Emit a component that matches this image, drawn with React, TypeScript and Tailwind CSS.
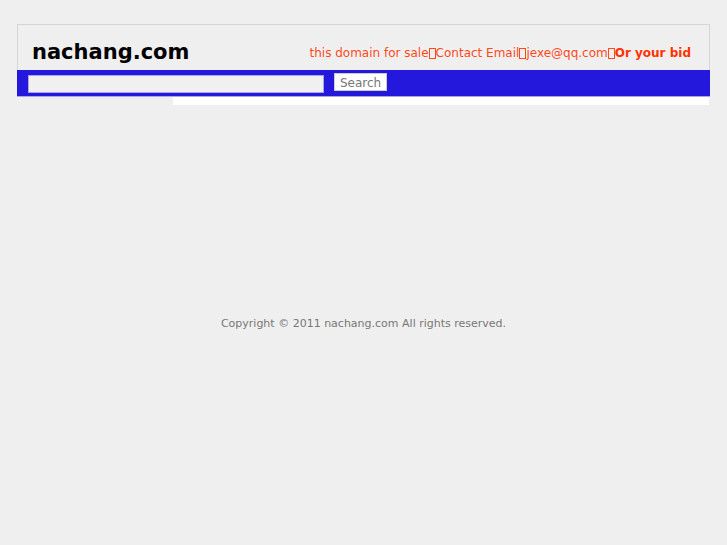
import type { FormEvent } from "react";

const DOMAIN = "nachang.com";

function Separator() {
  return <span aria-hidden="true" className="inline-block h-[11px] w-[7px] border border-current align-[-2px]" />;
}

function Header() {
  return (
    <header className="flex h-[46px] items-center justify-between border border-b-0 border-[#d5d5d2] pl-[14px] pr-[18px] pt-2">
      <h1 className="text-[21px] leading-7 font-bold text-black">{DOMAIN}</h1>
      <p className="pt-[2px] text-[12px] leading-4 whitespace-nowrap text-[#ff4a1c]">
        this domain for sale
        <Separator />
        Contact Email
        <Separator />
        jexe@qq.com
        <Separator />
        <b className="text-[#ff3300]">Or your bid</b>
      </p>
    </header>
  );
}

function SearchBar() {
  const onSubmit = (e: FormEvent) => e.preventDefault();

  return (
    <form onSubmit={onSubmit} className="flex h-[27px] items-start gap-[10px] border-b border-[#a9a5e8] bg-[#2318dc] pt-[3px] pl-[11px]">
      <input
        type="text"
        aria-label="Search"
        className="mt-[2px] h-[18px] w-[296px] border border-[#a9a5e8] bg-[#f0f0f0] px-1 text-[12px] text-[#666] outline-none"
      />
      <button type="submit" className="h-[18px] border border-[#cccccc] bg-white px-[5px] pt-px text-[12px] leading-4 text-[#777]">
        Search
      </button>
    </form>
  );
}

export default function App() {
  return (
    <div className="min-h-screen bg-[#efefef] px-[17px] pt-6 font-['DejaVu_Sans',sans-serif]">
      <Header />
      <SearchBar />
      <main className="flex min-h-[219px] items-start pr-px">
        <aside className="w-[156px] shrink-0" />
        <section className="h-2 grow bg-white" />
      </main>
      <footer className="text-center text-[11px] leading-4 text-[#777]">
        Copyright © 2011 {DOMAIN} All rights reserved.
      </footer>
    </div>
  );
}
